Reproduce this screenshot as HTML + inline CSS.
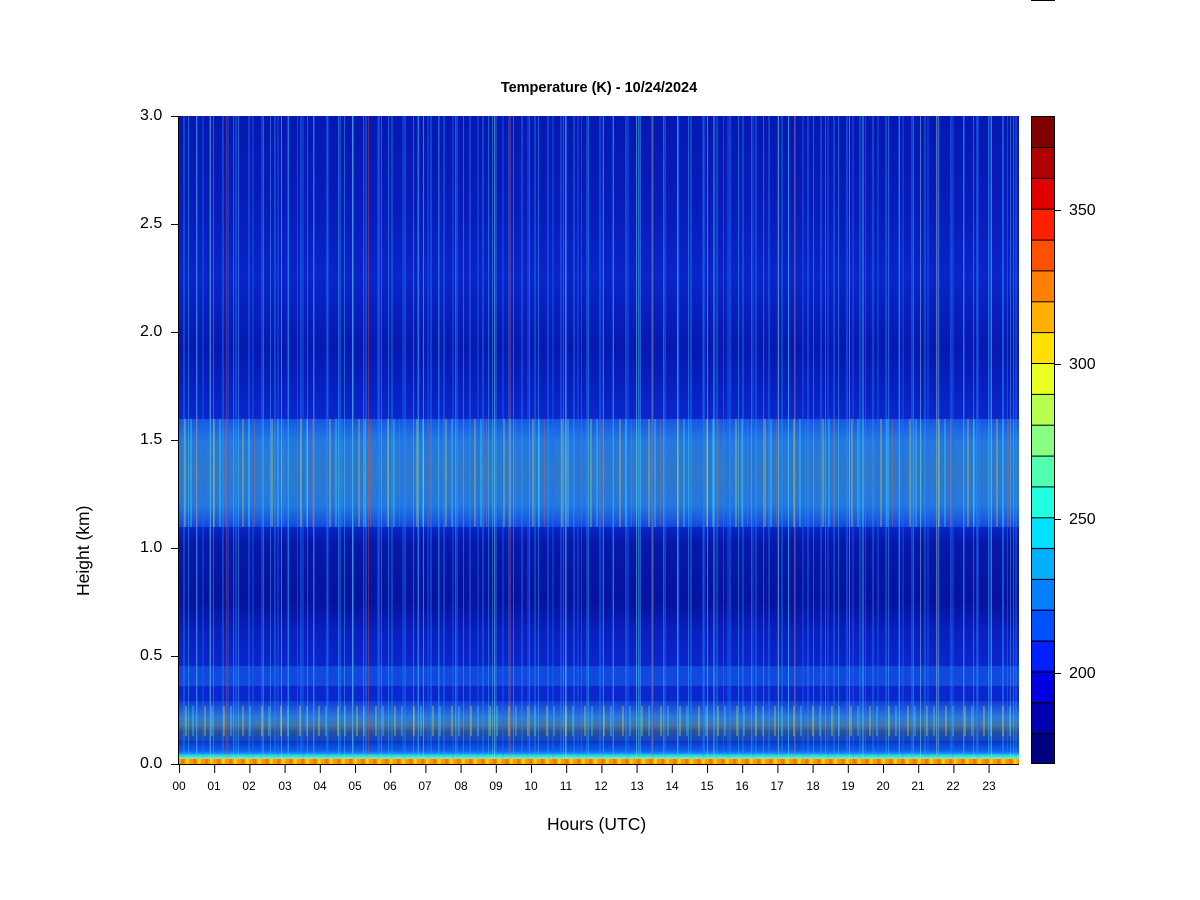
<!DOCTYPE html>
<html><head><meta charset="utf-8"><style>
body{margin:0;width:1200px;height:900px;background:#fff;font-family:"Liberation Sans",Arial,sans-serif;position:relative;overflow:hidden}
.t{position:absolute;font-size:14.5px;font-weight:bold;left:0;width:1198px;text-align:center;top:80px}
#plot{position:absolute;left:179px;top:116px;width:840px;height:648px;overflow:hidden;
background:linear-gradient(to bottom,#0618b0 0%,#081cbc 15%,#0a24c8 25%,#0618b0 36%,#0a28d0 48%,#0a26cc 63%,#0618a8 66%,#0612a0 75%,#0a20c0 80%,#0a28d0 87%,#0a24c8 93%,#040c90 95%,#1060f0 98%,#20e0ff 99%,#ffd000 99.5%,#ff4000 100%)}
.band{position:absolute;left:0;width:100%}
.s{position:absolute;left:0;top:0;width:100%;height:100%}
.lbl{position:absolute;font-size:16px}
.xl{position:absolute;font-size:12px;top:779px;width:30px;text-align:center}
</style></head><body>
<div class="t">Temperature (K) - 10/24/2024</div>
<div id="plot">
 <div class="band" style="top:303px;height:108px;background:linear-gradient(to bottom,rgba(40,140,255,.45),rgba(60,200,240,.5) 20%,rgba(90,220,200,.45) 50%,rgba(60,200,240,.5) 80%,rgba(40,140,255,.35))"></div>
 <div class="band" style="top:585px;height:40px;background:linear-gradient(to bottom,rgba(40,140,255,.2),rgba(80,200,240,.5) 40%,rgba(140,230,160,.45) 60%,rgba(40,140,255,.2))"></div>
 <div class="band" style="top:550px;height:20px;background:rgba(40,150,255,.3)"></div>
 <div class="s" style="background:repeating-linear-gradient(to right,transparent 0,transparent 9px,rgba(60,230,255,.35) 9px,rgba(60,230,255,.35) 10px,transparent 10px,transparent 23px,rgba(20,110,255,.35) 23px,rgba(20,110,255,.35) 25px)"></div>
 <div class="s" style="background:repeating-linear-gradient(to right,transparent 0,transparent 31px,rgba(160,255,200,.4) 31px,rgba(160,255,200,.4) 32px,transparent 32px,transparent 47px,rgba(255,80,40,.35) 47px,rgba(255,80,40,.35) 48px,transparent 48px,transparent 71px)"></div>
 <div class="s" style="background:repeating-linear-gradient(to right,transparent 0,transparent 4px,rgba(40,160,255,.3) 4px,rgba(40,160,255,.3) 6px,transparent 6px,transparent 13px)"></div>
 <div class="s" style="background:repeating-linear-gradient(to right,transparent 0,transparent 17px,rgba(100,240,255,.3) 17px,rgba(100,240,255,.3) 18px,transparent 18px,transparent 37px)"></div>
 <div class="band" style="top:303px;height:108px;background:repeating-linear-gradient(to right,transparent 0,transparent 5px,rgba(240,220,40,.3) 5px,rgba(240,220,40,.3) 7px,transparent 7px,transparent 11px,rgba(80,230,230,.3) 11px,rgba(80,230,230,.3) 13px,transparent 13px,transparent 17px,rgba(255,90,30,.3) 17px,rgba(255,90,30,.3) 18px,transparent 18px,transparent 29px)"></div>
 <div class="band" style="top:590px;height:30px;background:repeating-linear-gradient(to right,transparent 0,transparent 6px,rgba(220,240,60,.3) 6px,rgba(220,240,60,.3) 8px,transparent 8px,transparent 13px,rgba(80,230,230,.3) 13px,rgba(80,230,230,.3) 15px,transparent 15px,transparent 19px)"></div>
 <div class="band" style="top:643px;height:5px;background:repeating-linear-gradient(to right,#ffb000 0,#ff6000 4px,#ffe000 8px,#ff8000 12px)"></div>
 <div class="band" style="top:638px;height:5px;background:linear-gradient(to bottom,rgba(30,200,255,.5),rgba(150,255,120,.7))"></div>
</div>
<div style="position:absolute;left:178px;top:116px;width:1px;height:649px;background:#000"></div>
<div style="position:absolute;left:179px;top:764px;width:840px;height:1px;background:#000"></div>
<div class="lbl" style="left:140px;top:107px">3.0</div>
<div class="lbl" style="left:140px;top:215px">2.5</div>
<div class="lbl" style="left:140px;top:323px">2.0</div>
<div class="lbl" style="left:140px;top:431px">1.5</div>
<div class="lbl" style="left:140px;top:539px">1.0</div>
<div class="lbl" style="left:140px;top:647px">0.5</div>
<div class="lbl" style="left:140px;top:755px">0.0</div>
<div style="position:absolute;left:171px;top:116px;width:7px;height:1px;background:#000;box-shadow:0 108px #000,0 216px #000,0 324px #000,0 432px #000,0 540px #000,0 648px #000"></div>
<div class="lbl" style="left:73px;top:596px;transform:rotate(-90deg);transform-origin:0 0;width:140px;font-size:17.5px">Height (km)</div>
<div class="lbl" style="left:547px;top:814px;font-size:17.5px">Hours (UTC)</div>
<div style="position:absolute;left:179px;top:765px;width:1px;height:8px;background:#000;box-shadow:35.2px 0 #000,70.4px 0 #000,105.6px 0 #000,140.8px 0 #000,176px 0 #000,211.2px 0 #000,246.4px 0 #000,281.6px 0 #000,316.8px 0 #000,352px 0 #000,387.2px 0 #000,422.4px 0 #000,457.6px 0 #000,492.8px 0 #000,528px 0 #000,563.2px 0 #000,598.4px 0 #000,633.6px 0 #000,668.8px 0 #000,704px 0 #000,739.2px 0 #000,774.4px 0 #000,809.6px 0 #000"></div>
<div class="xl" style="left:164px">00</div><div class="xl" style="left:199px">01</div><div class="xl" style="left:234px">02</div><div class="xl" style="left:270px">03</div><div class="xl" style="left:305px">04</div><div class="xl" style="left:340px">05</div><div class="xl" style="left:375px">06</div><div class="xl" style="left:410px">07</div><div class="xl" style="left:446px">08</div><div class="xl" style="left:481px">09</div><div class="xl" style="left:516px">10</div><div class="xl" style="left:551px">11</div><div class="xl" style="left:586px">12</div><div class="xl" style="left:622px">13</div><div class="xl" style="left:657px">14</div><div class="xl" style="left:692px">15</div><div class="xl" style="left:727px">16</div><div class="xl" style="left:762px">17</div><div class="xl" style="left:798px">18</div><div class="xl" style="left:833px">19</div><div class="xl" style="left:868px">20</div><div class="xl" style="left:903px">21</div><div class="xl" style="left:938px">22</div><div class="xl" style="left:974px">23</div>
<div style="position:absolute;left:1031px;top:116px;width:24px;height:648px;border:1px solid #000;box-sizing:border-box;background:linear-gradient(to bottom,
#800000 0 4.76%,#b00000 4.76% 9.52%,#e00000 9.52% 14.29%,#ff2000 14.29% 19.05%,#ff5000 19.05% 23.81%,#ff8000 23.81% 28.57%,#ffb000 28.57% 33.33%,#ffe000 33.33% 38.1%,#e8ff20 38.1% 42.86%,#b8ff50 42.86% 47.62%,#88ff80 47.62% 52.38%,#50ffb0 52.38% 57.14%,#20ffe0 57.14% 61.9%,#00e0ff 61.9% 66.67%,#00b0ff 66.67% 71.43%,#0080ff 71.43% 76.19%,#0050ff 76.19% 80.95%,#0020ff 80.95% 85.71%,#0000e0 85.71% 90.48%,#0000b0 90.48% 95.24%,#000080 95.24% 100%)"></div>
<div style="position:absolute;left:1031px;top:146.9px;width:24px;height:1px;background:#000;box-shadow:0 30.86px #000,0 61.7px #000,0 92.6px #000,0 123.4px #000,0 154.3px #000,0 185.1px #000,0 216px #000,0 246.9px #000,0 277.7px #000,0 308.6px #000,0 339.4px #000,0 370.3px #000,0 401.1px #000,0 432px #000,0 462.9px #000,0 493.7px #000,0 524.6px #000,0 555.4px #000,0 586.3px #000"></div>
<div style="position:absolute;left:1055px;top:210px;width:6px;height:1px;background:#000;box-shadow:0 154px #000,0 309px #000,0 463px #000"></div>
<div class="lbl" style="left:1069px;top:202px">350</div>
<div class="lbl" style="left:1069px;top:356px">300</div>
<div class="lbl" style="left:1069px;top:511px">250</div>
<div class="lbl" style="left:1069px;top:665px">200</div>
<div style="position:absolute;left:1031px;top:0;width:24px;height:1px;background:#000"></div>
</body></html>
